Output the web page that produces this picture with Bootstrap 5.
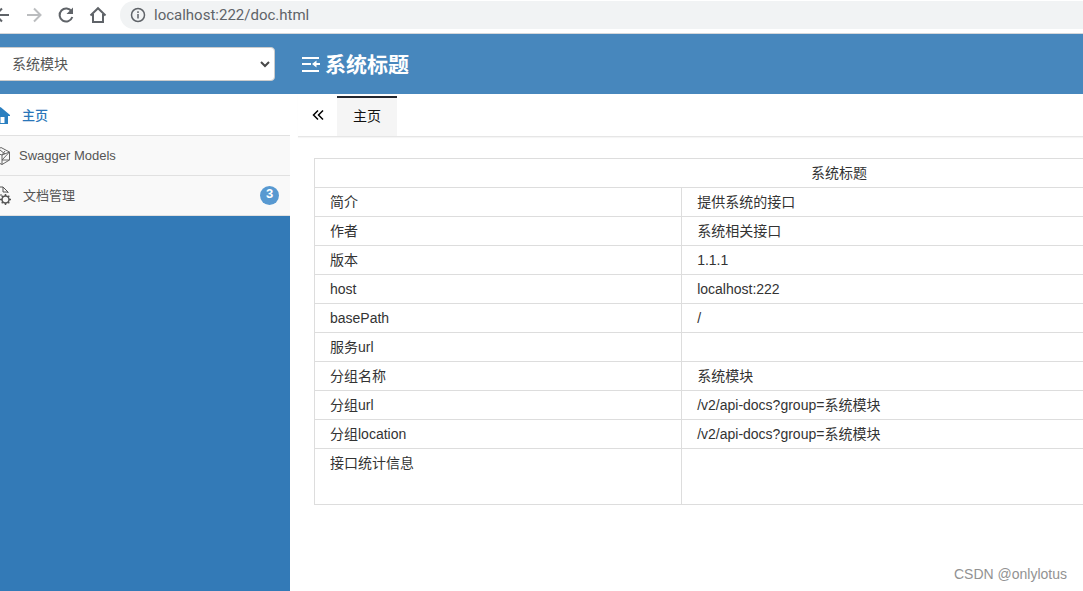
<!DOCTYPE html>
<html lang="zh-CN">
<head>
<meta charset="utf-8">
<meta name="viewport" content="width=device-width, initial-scale=1">
<title>系统标题</title>
<link href="https://cdn.jsdelivr.net/npm/bootstrap@5.3.0/dist/css/bootstrap.min.css" rel="stylesheet">
<style>
  body { font-family: "Liberation Sans", "Noto Sans CJK SC", sans-serif; font-size: 14px; line-height: 20px; color: #333; background: #fff; }
  svg { display: block; flex: none; }
  .browser-bar { height: 34px; padding-bottom: 4px; border-bottom: 1px solid #d5d7da; color: #5f6368; }
  .browser-nav { width: 120px; gap: 14px; margin-left: -7px; margin-right: 7px; }
  .browser-nav button { color: inherit; }
  .browser-nav button:disabled { color: #bbbdbf; opacity: 1; }
  .address { height: 28px; padding-left: 10px; gap: 8px; background: #f1f3f4; border-radius: 14px 0 0 14px; }
  .address input { font: 15px/20px Roboto, sans-serif; color: #5f6368; outline: 0; }
  .app-header { height: 60px; background: #4787bd; }
  .side-col { width: 290px; flex: none; }
  .group-select { width: 285px; height: 34px; margin-left: -10px; padding: 6px 21px; font-size: 14px; line-height: 20px; color: #555; border: 1px solid #ccc; border-radius: 4px; background: #fff url("data:image/svg+xml,%3Csvg xmlns='http://www.w3.org/2000/svg' viewBox='0 0 10 8'%3E%3Cpath d='M1 2l4 4 4-4' fill='none' stroke='%23484848' stroke-width='2'/%3E%3C/svg%3E") no-repeat right 4px center / 10px 8px; }
  .brand-title { font-size: 21px; line-height: 28px; font-weight: 700; gap: 5px; padding: 2px 0 0 12px; }
  .sidebar { background: #337ab7; }
  .side-item { height: 40px; padding: 1px 11px 0 0; border-bottom: 1px solid #e1e1e1; background: #f9f9f9; color: #555; font-size: 13px; text-decoration: none; }
  .side-item svg { margin-left: -9px; }
  .side-item.current { height: 42px; padding-top: 2px; background: #fff; color: #2a76b9; font-weight: 500; }
  .count { width: 19px; height: 19px; margin-bottom: 2px; padding-bottom: 2px; border-radius: 50%; background: #5899d1; color: #fff; font-weight: 700; }
  .main-pane { min-width: 0; padding-left: 8px; }
  .tab-strip { height: 43px; border-bottom: 1px solid #e6e6e6; box-shadow: 0 1px 1px #f5f5f5; padding-top: 2px; }
  .tab-scroll { width: 39px; color: #000; }
  .tab-home { width: 60px; padding-bottom: 2px; border-top: 2px solid #23262e; background: #f5f5f5; color: #111; }
  .doc-area { padding: 21px 0 0 16px; }
  .info-table { min-width: 1050px; table-layout: fixed; color: #333; border-color: #ddd; }
  .info-table > :not(caption) > * > * { height: 29px; padding: 4px 15px; font-weight: 400; }
  .info-table .name-col { width: 35%; }
  .info-table .stats > * { height: 56px; }
  .watermark { right: 16px; bottom: 7px; font-size: 14px; color: #929292; }
</style>
</head>
<body class="d-flex flex-column vh-100 overflow-hidden">
  <div class="browser-bar d-flex align-items-center">
    <div class="browser-nav d-flex align-items-center flex-shrink-0">
      <button class="btn p-0 border-0" aria-label="后退"><svg width="18" height="18" viewBox="0 0 18 18" fill="none" stroke="currentColor" stroke-width="2"><path d="M16 9H3M9 2.500 2.500 9 9 15.500"/></svg></button>
      <button class="btn p-0 border-0" aria-label="前进" disabled><svg width="18" height="18" viewBox="0 0 18 18" fill="none" stroke="currentColor" stroke-width="2"><path d="M2 9h13M9 2.500 15.500 9 9 15.500"/></svg></button>
      <button class="btn p-0 border-0" aria-label="刷新"><svg width="18" height="18" viewBox="0 0 18 18"><path d="M14.600 5.500A6.500 6.500 0 1 0 15.300 11" fill="none" stroke="currentColor" stroke-width="2"/><path d="M16 1.500V8H9.500z" fill="currentColor"/></svg></button>
      <button class="btn p-0 border-0" aria-label="主页"><svg width="18" height="18" viewBox="0 0 18 18" fill="none" stroke="currentColor" stroke-width="2"><path d="M1.500 9.500 9 2.200l7.500 7.300M4 8v8h10V8"/></svg></button>
    </div>
    <div class="address d-flex align-items-center flex-grow-1">
      <svg width="16" height="16" viewBox="0 0 16 16" fill="none" stroke="currentColor" stroke-width="1.500"><circle cx="8" cy="8" r="6.500"/><path d="M8 7v4.500M8 4.300V6"/></svg>
      <input class="border-0 bg-transparent p-0 flex-grow-1" type="text" aria-label="地址" value="localhost:222/doc.html">
    </div>
  </div>

  <header class="app-header d-flex align-items-center flex-shrink-0">
    <div class="side-col">
      <select class="form-select group-select" aria-label="分组"><option>系统模块</option></select>
    </div>
    <div class="brand-title d-flex align-items-center text-white">
      <svg width="18" height="18" viewBox="0 0 18 18" fill="none" stroke="currentColor" stroke-width="2"><path d="M0 2h17M0 8h9M0 15h17M13 8h5"/><path d="M14.500 4.500v7L10 8z" fill="currentColor" stroke="none"/></svg>
      <span>系统标题</span>
    </div>
  </header>

  <div class="d-flex flex-grow-1 overflow-hidden">
    <nav class="sidebar side-col">
      <a class="side-item current d-flex align-items-center" href="#home">
        <svg width="19" height="18" viewBox="0 0 19 18"><path d="M9.500 0 19 8v1h-2v8H3V9H0V8z" fill="#2a7fc0"/><path d="M9.500 10h4v6h-4z" fill="#fff"/></svg>
        <span class="ms-2 ps-1">主页</span>
      </a>
      <a class="side-item d-flex align-items-center" href="#models">
        <svg width="20" height="18" viewBox="0 0 20 18" fill="none" stroke="#666"><path d="M10 .500 18.500 5v8L11 17.500 2 13V5zM2 5l9 3 7.500-3M11 8v9.500M9 3l5 4M11 8l3-4M11 13l7.500-8M11 13l7.500 0"/></svg>
        <span class="ms-2">Swagger Models</span>
      </a>
      <a class="side-item d-flex align-items-center" href="#docs">
        <svg width="20" height="20" viewBox="0 0 20 20" fill="none" stroke="#555"><path d="M8 16H2V1h10l5 5v1M12 1v5h5M5 9h6M5 12h4"/><circle cx="14.500" cy="13.500" r="3.500" stroke-width="1.500"/><path d="M14.500 8v2M14.500 17v2M9 13.500h2M18 13.500h2M10.700 9.700l1.300 1.300M17 16l1.300 1.300M10.700 17.300 12 16M17 11l1.300-1.300" stroke-width="1.500"/></svg>
        <span class="ms-2 ps-1">文档管理</span>
        <span class="count d-flex align-items-center justify-content-center ms-auto">3</span>
      </a>
    </nav>

    <main class="main-pane flex-grow-1 overflow-hidden">
      <div class="tab-strip d-flex">
        <button class="tab-scroll btn p-0 border-0 d-flex align-items-center justify-content-center" aria-label="向左滚动"><svg width="12" height="12" viewBox="0 0 12 12" fill="none" stroke="currentColor" stroke-width="1.500"><path d="M6 .500 1.500 5 6 9.500M11 .500 6.500 5 11 9.500"/></svg></button>
        <a class="tab-home d-flex align-items-center justify-content-center text-decoration-none" href="#home">主页</a>
      </div>
      <div class="doc-area">
        <table class="table table-bordered info-table mb-0">
          <colgroup><col class="name-col"><col></colgroup>
          <thead><tr><th colspan="2" class="text-center">系统标题</th></tr></thead>
          <tbody>
            <tr><td>简介</td><td>提供系统的接口</td></tr>
            <tr><td>作者</td><td>系统相关接口</td></tr>
            <tr><td>版本</td><td>1.1.1</td></tr>
            <tr><td>host</td><td>localhost:222</td></tr>
            <tr><td>basePath</td><td>/</td></tr>
            <tr><td>服务url</td><td></td></tr>
            <tr><td>分组名称</td><td>系统模块</td></tr>
            <tr><td>分组url</td><td>/v2/api-docs?group=系统模块</td></tr>
            <tr><td>分组location</td><td>/v2/api-docs?group=系统模块</td></tr>
            <tr class="stats"><td>接口统计信息</td><td></td></tr>
          </tbody>
        </table>
      </div>
    </main>
  </div>
  <div class="watermark position-absolute">CSDN @onlylotus</div>
<script src="https://cdn.jsdelivr.net/npm/bootstrap@5.3.0/dist/js/bootstrap.bundle.min.js"></script>
</body>
</html>
